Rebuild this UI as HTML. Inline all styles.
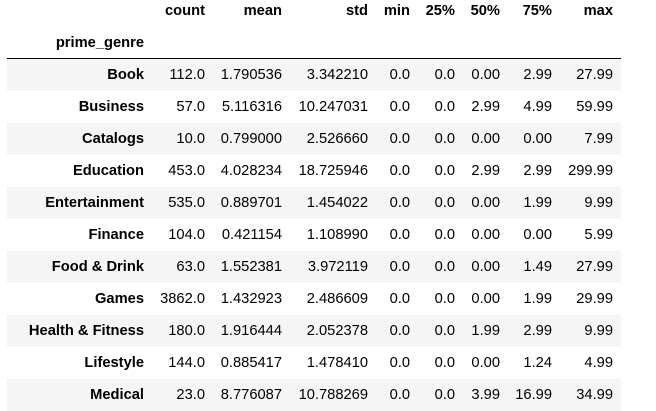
<!DOCTYPE html><html><head><style>
body{margin:0;width:656px;height:404px;overflow:hidden;background:#fff;font-family:"Liberation Sans",Arial,sans-serif;font-size:14.7px;color:#000}
.r{position:absolute;left:7px;width:614px;height:32px;line-height:32px}
.r span{position:absolute;top:0;text-align:right;white-space:nowrap}
.g{background:#f5f5f5}
.b{font-weight:bold}
</style></head><body>
<script>
var W=[[7,145],[152,61],[213,77],[290,86],[376,42],[418,45],[463,45],[508,52],[560,61]];
function row(top,cells,cls,bold0){var d=document.createElement('div');d.className='r '+(cls||'');d.style.top=top+'px';
var h='';cells.forEach(function(t,i){h+='<span class="'+((i==0&&bold0)||cls=='b'?'b':'')+'" style="left:'+(W[i][0]-7)+'px;width:'+(W[i][1]-8)+'px">'+t+'</span>'});d.innerHTML=h;document.body.appendChild(d);}
row(-5,['','count','mean','std','min','25%','50%','75%','max'],'b');
row(27,['prime_genre','','','','','','','',''],'b');
var line=document.createElement('div');line.style.cssText='position:absolute;left:7px;width:614px;top:58px;height:1px;background:#000';document.body.appendChild(line);
var D=[
['Book','112.0','1.790536','3.342210','0.0','0.0','0.00','2.99','27.99'],
['Business','57.0','5.116316','10.247031','0.0','0.0','2.99','4.99','59.99'],
['Catalogs','10.0','0.799000','2.526660','0.0','0.0','0.00','0.00','7.99'],
['Education','453.0','4.028234','18.725946','0.0','0.0','2.99','2.99','299.99'],
['Entertainment','535.0','0.889701','1.454022','0.0','0.0','0.00','1.99','9.99'],
['Finance','104.0','0.421154','1.108990','0.0','0.0','0.00','0.00','5.99'],
['Food &amp; Drink','63.0','1.552381','3.972119','0.0','0.0','0.00','1.49','27.99'],
['Games','3862.0','1.432923','2.486609','0.0','0.0','0.00','1.99','29.99'],
['Health &amp; Fitness','180.0','1.916444','2.052378','0.0','0.0','1.99','2.99','9.99'],
['Lifestyle','144.0','0.885417','1.478410','0.0','0.0','0.00','1.24','4.99'],
['Medical','23.0','8.776087','10.788269','0.0','0.0','3.99','16.99','34.99']];
D.forEach(function(r,i){row(59+32*i,r,i%2==0?'g':'',true)});
</script>
</body></html>
